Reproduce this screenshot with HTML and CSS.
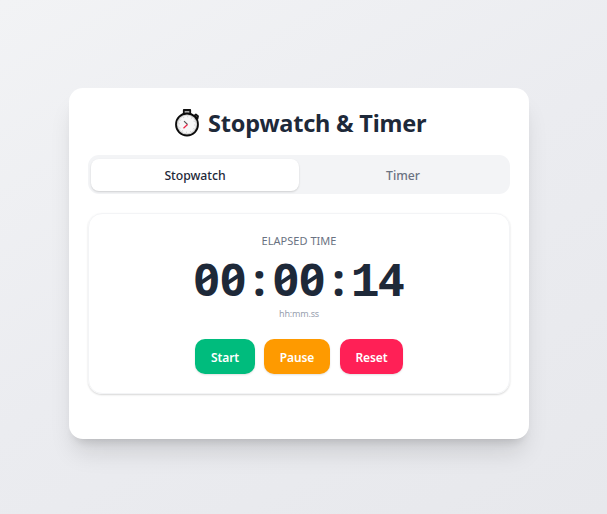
FILE: index.html
```html
<!DOCTYPE html>
<html lang="en">
<head>
<meta charset="utf-8">
<title>Stopwatch &amp; Timer</title>
<link rel="stylesheet" href="styles.css">
</head>
<body>
<main class="card">
  <h1 class="title">
    <svg class="watch" viewBox="0 0 26 28" aria-hidden="true">
      <path d="M8.8 1h6.4v4.8H8.8z" fill="#aaa" stroke="#111" stroke-width="1.8" stroke-linejoin="round"/>
      <path d="M19.3 6.6l1.6-1.2 2.2 1.7-.6 2.6z" fill="#777" stroke="#111" stroke-width="1.7" stroke-linejoin="round"/>
      <circle cx="12" cy="15.5" r="11" fill="#d0d0d0" stroke="#0b0b0b" stroke-width="1.8"/>
      <circle cx="12" cy="15.5" r="8.9" fill="#f7f7f7"/>
      <circle cx="12" cy="15.5" r="7.8" fill="none" stroke="#c4c4c4" stroke-width="1" stroke-dasharray="1 3.08"/>
      <path d="M9 12.2l3.5 3.3" stroke="#555" stroke-width="1.1" fill="none"/>
      <path d="M12.5 15.5l-4 3.8" stroke="#ee2346" stroke-width="1.2" fill="none"/>
    </svg>
    <span class="title-text">Stopwatch &amp; Timer</span>
  </h1>
  <div class="tabs">
    <div class="tab active">Stopwatch</div>
    <div class="tab">Timer</div>
  </div>
  <section class="panel">
    <div class="label">ELAPSED TIME</div>
    <div class="time"><span class="zero">0</span><span class="zero">0</span><span>:</span><span class="zero">0</span><span class="zero">0</span><span>:</span><span class="one">1</span><span>4</span></div>
    <div class="hint">hh:mm.ss</div>
    <div class="actions">
      <button class="btn start">Start</button>
      <button class="btn pause">Pause</button>
      <button class="btn reset">Reset</button>
    </div>
  </section>
</main>
</body>
</html>
```
FILE: styles.css
```css
* { box-sizing: border-box; }
body {
  margin: 0;
  height: 514px;
  overflow: hidden;
  padding: 88px 0 0 69px;
  background: linear-gradient(150deg, #f2f3f5, #ebecf0 50%, #e7e8ec);
  font-family: "Noto Sans", "Open Sans", sans-serif;
  color: #1e2939;
}
.card {
  width: 460px;
  height: 351px;
  padding: 20px 19px;
  background: #fff;
  border-radius: 14px;
  box-shadow: 0 18px 24px -5px rgba(0,0,0,.12), 0 8px 10px -6px rgba(0,0,0,.14);
}
.title {
  display: flex;
  justify-content: center;
  align-items: center;
  height: 30px;
  margin: 0 0 17px;
  font-size: 24px;
  line-height: 30px;
  white-space: nowrap;
}
.watch { width: 26px; height: 28px; margin: 0 7px 0 1px; flex: none; }
.title-text { width: 216px; height: 30px; font-size: 23.5px; letter-spacing: -.21px; }
.tabs {
  display: flex;
  height: 39px;
  padding: 4px 3px;
  background: #f3f4f6;
  border-radius: 11px;
}
.tab {
  flex: 1;
  height: 32px;
  border-radius: 8px;
  line-height: 33px;
  text-align: center;
  font-size: 12.25px;
  font-weight: 500;
  letter-spacing: -.05px;
  color: #6a7282;
}
.active { background: #fff; color: #1e2939; box-shadow: 0 1px 2px rgba(0,0,0,.15); }
.panel {
  display: flex;
  flex-direction: column;
  align-items: center;
  height: 181px;
  margin-top: 19px;
  padding-top: 19px;
  border: 1px solid #f3f4f6;
  border-radius: 14px;
  box-shadow: 0 1px 2px rgba(0,0,0,.16);
}
.label { font-size: 11px; line-height: 16px; letter-spacing: .04px; color: #6a7282; }
.time {
  display: flex;
  margin-top: 4px;
  height: 52px;
  font: bold 45px/51px "Noto Sans", sans-serif;
}
.time span { width: 26.4px; text-align: center; }
.time .zero { position: relative; }
.time .one { font-family: "Liberation Mono", monospace; font-size: 48px; line-height: 61px; text-indent: -1px; }
.zero::after {
  content: "";
  position: absolute;
  left: 6px;
  top: 24px;
  width: 15px;
  height: 4px;
  background: #1e2939;
  transform: rotate(-34deg);
}
.hint { margin-top: 2px; font-size: 9px; line-height: 14px; letter-spacing: -.2px; color: #99a1af; }
.actions { display: flex; gap: 9px; margin-top: 18px; }
.btn {
  height: 35px;
  padding: 1px 0 0;
  border: 0;
  border-radius: 10px;
  color: #fff;
  font: 600 12px/35px "Noto Sans", sans-serif;
  letter-spacing: -.1px;
  box-shadow: 0 1px 2px rgba(0,0,0,.12);
}
.start { width: 60px; background: #00bc7d; }
.pause { width: 66px; background: #fe9a00; }
.reset { width: 63px; margin-left: 1px; background: #ff2056; }
```
